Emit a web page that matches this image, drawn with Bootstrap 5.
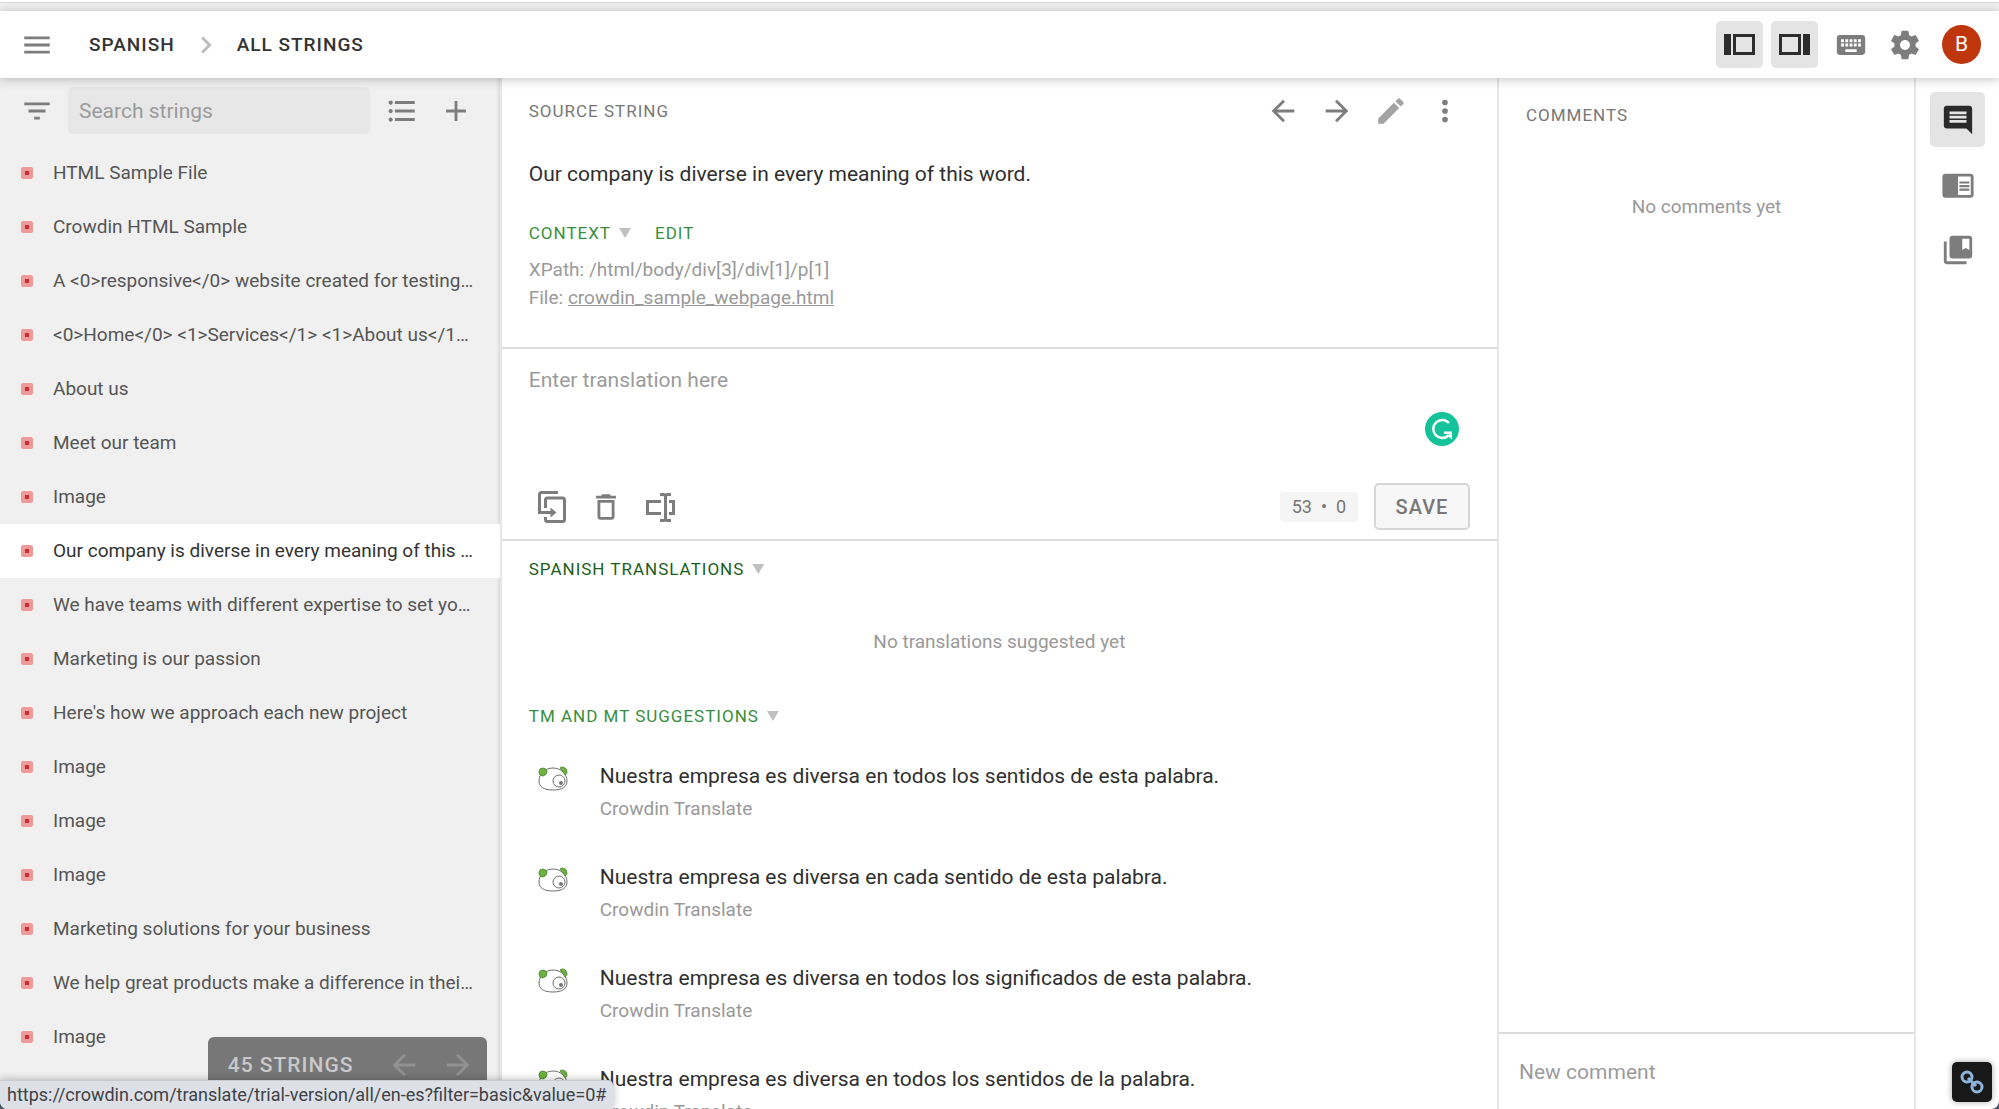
<!DOCTYPE html>
<html lang="en">
<head>
<meta charset="utf-8">
<meta name="viewport" content="width=device-width, initial-scale=1">
<title>Crowdin Editor</title>
<link href="https://cdn.jsdelivr.net/npm/bootstrap@5.3.0/dist/css/bootstrap.min.css" rel="stylesheet">
<script src="https://cdn.jsdelivr.net/npm/bootstrap@5.3.0/dist/js/bootstrap.bundle.min.js"></script>
<style>
html { background: #4b566b; }
body { font-family: Roboto, "Liberation Sans", sans-serif; font-size: 19px; line-height: 28px; color: #333; background: #4b566b; }
.app { background: #fff; border-radius: 0 0 8px 8px; }
.strip { height: 11px; background: #f0f0f0; border-top: 2px solid #fff; box-shadow: inset 0 1px #d8d8d8; }
.topbar { height: 67px; padding: 0 18px 0 20px; box-shadow: 0 1px 10px rgba(0,0,0,.25); z-index: 5; font-weight: 500; letter-spacing: 1px; }
.topbar a { color: #333; text-decoration: none; }
.crumbs { margin-left: 35px; }
.crumb-sep { margin: 0 14px; color: #bbb; }
.ico { width: 34px; height: 34px; fill: currentColor; display: block; flex: none; }
.ib { border: 0; padding: 0; background: none; color: #7d7d7d; width: 34px; flex: none; display: block; }
.toggle { width: 47px; height: 47px; background: #e4e4e4; color: #2d2d2d; border-radius: 5px; display: grid; place-items: center; }
.avatar-b { width: 39px; height: 39px; background: #bf360c; color: #fff; border-radius: 50%; font-size: 21px; font-weight: 400; letter-spacing: 0; line-height: 39px; border: 0; padding: 0; }
.side { width: 25%; background: #f0f0f0; box-shadow: inset -4px 0 4px -3px rgba(0,0,0,.12); }
.side-tools { padding: 9px 27px 12px 20px; }
.searchbox { margin: 0 15px 0 14px; }
.search { height: 47px; background: #e7e7e7; border: 0; border-radius: 5px; padding: 0 11px; font-size: 21px; width: 100%; }
.search::placeholder, .entry::placeholder { color: #9b9b9b; opacity: 1; }
.search:focus, .entry:focus { outline: 1px solid #bbb; }
.srow { height: 54px; padding: 0 26px 0 21px; gap: 20px; color: #555; text-decoration: none; }
.srow.sel { background: #fff; color: #333; }
.dot { width: 12px; height: 12px; border: 4px solid #ee9a9a; background: #c62f35; border-radius: 2px; flex: none; }
.pager { right: 13px; bottom: 16px; width: 279px; height: 56px; background: #777; color: #c9c9c9; border-radius: 6px 6px 0 0; padding: 0 12px 0 20px; font-weight: 500; letter-spacing: 1px; font-size: 21px; }
.pager .ib { color: #919191; }
.cap { font-size: 17px; line-height: 22px; letter-spacing: 1px; font-weight: 400; margin: 0; color: #777; }
.cap a { text-decoration: none; color: #388e3c; }
.cap.deep a { color: #1b5e20; }
.tri { width: 12px; height: 10px; background: #c0c0c0; clip-path: polygon(0 0, 100% 0, 50% 100%); display: inline-block; }
.work { border-left: 2px solid #e6e6e6; }
.src { height: 271px; padding: 16px 35px 0 27px; border-bottom: 2px solid #dcdcdc; }
.src .ctx { margin: 34px 0 12px; }
.big { font-size: 21px; line-height: 28px; color: #2f2f2f; }
.dim { color: #999; }
.pen { color: #a3a3a3; }
.editor { height: 192px; border-bottom: 2px solid #dcdcdc; padding: 17px 27px 9px; }
.entry { border: 0; padding: 0; resize: none; font-size: 21px; line-height: 28px; width: 100%; background: none; }
.edit-tools { padding-left: 6px; }
.gram { right: 38px; top: 63px; width: 34px; height: 34px; }
.count { background: #f5f5f5; color: #777; border-radius: 4px; height: 30px; padding: 0 12px; font-size: 18px; line-height: 30px; white-space: pre; }
.save { width: 96px; height: 47px; border: 2px solid #d6d6d6; background: #f7f7f7; color: #777; border-radius: 5px; font-size: 20px; font-weight: 500; letter-spacing: 1px; padding: 0; }
.results { padding: 17px 27px 0; }
.sugg-head { margin: 49px 0 35px; }
.sugg { gap: 30px; padding-left: 8px; height: 101px; }
.sugg svg { margin-top: 4px; }
.sub { margin-top: 5px; color: #999; }
.notes { width: 417px; border-left: 2px solid #e6e6e6; flex: none; }
.notes-head { padding: 26px 27px 0; }
.none-yet { margin: 67px 0 0; }
.newc { border-top: 2px solid #dcdcdc; height: 77px; padding: 0 20px; }
.rail { width: 85px; border-left: 2px solid #e6e6e6; padding-top: 14px; flex: none; gap: 10px; }
.rb { width: 55px; height: 55px; border: 0; border-radius: 5px; background: none; color: #7d7d7d; display: grid; place-items: center; padding: 0; }
.rb.on { background: #e4e4e4; color: #2a2a2a; }
.status { left: 0; bottom: 0; height: 29px; background: #dde1e7; border-top: 1px solid #c6c9ce; border-radius: 0 5px 0 0; padding: 0 7px; font-size: 18px; line-height: 28px; color: #3f4246; z-index: 8; box-shadow: 0 0 8px rgba(0,0,0,.3); }
.linkbtn { right: 7px; bottom: 7px; width: 40px; height: 40px; border: 0; border-radius: 5px; background: #181818; box-shadow: 0 0 6px rgba(0,0,0,.35); z-index: 8; padding: 0; display: grid; place-items: center; }
</style>
</head>
<body>
<svg class="d-none" xmlns="http://www.w3.org/2000/svg">
  <symbol id="i-menu" viewBox="0 0 24 24"><path d="M3 18h18v-2H3v2zm0-5h18v-2H3v2zm0-7v2h18V6H3z"/></symbol>
  <symbol id="i-chev" viewBox="0 0 24 24"><path d="M10 6L8.59 7.41 13.17 12l-4.58 4.59L10 18l6-6z"/></symbol>
  <symbol id="i-filter" viewBox="0 0 24 24"><path d="M10 18h4v-2h-4v2zM3 6v2h18V6H3zm3 7h12v-2H6v2z"/></symbol>
  <symbol id="i-list" viewBox="0 0 24 24"><path d="M4 10.5c-.83 0-1.5.67-1.5 1.5s.67 1.5 1.5 1.5 1.5-.67 1.5-1.5-.67-1.5-1.5-1.5zm0-6c-.83 0-1.5.67-1.5 1.5S3.17 7.5 4 7.5 5.5 6.83 5.5 6 4.83 4.5 4 4.5zm0 12c-.83 0-1.5.68-1.5 1.5s.68 1.5 1.5 1.5 1.5-.68 1.5-1.5-.67-1.5-1.5-1.5zM7 19h14v-2H7v2zm0-6h14v-2H7v2zm0-8v2h14V5H7z"/></symbol>
  <symbol id="i-add" viewBox="0 0 24 24"><path d="M19 13h-6v6h-2v-6H5v-2h6V5h2v6h6v2z"/></symbol>
  <symbol id="i-back" viewBox="0 0 24 24"><path d="M20 11H7.83l5.59-5.59L12 4l-8 8 8 8 1.41-1.41L7.83 13H20v-2z"/></symbol>
  <symbol id="i-fwd" viewBox="0 0 24 24"><path d="M12 4l-1.41 1.41L16.17 11H4v2h12.17l-5.58 5.59L12 20l8-8z"/></symbol>
  <symbol id="i-edit" viewBox="0 0 24 24"><path d="M3 17.25V21h3.75L17.81 9.94l-3.75-3.75L3 17.25zM20.71 7.04c.39-.39.39-1.02 0-1.41l-2.34-2.34c-.39-.39-1.02-.39-1.41 0l-1.83 1.83 3.75 3.75 1.83-1.83z"/></symbol>
  <symbol id="i-more" viewBox="0 0 24 24"><circle cx="12" cy="6" r="2"/><circle cx="12" cy="12" r="2"/><circle cx="12" cy="18" r="2"/></symbol>
  <symbol id="i-kbd" viewBox="0 0 24 24"><path d="M20 5H4c-1.1 0-1.99.9-1.99 2L2 17c0 1.1.9 2 2 2h16c1.1 0 2-.9 2-2V7c0-1.1-.9-2-2-2zm-9 3h2v2h-2V8zm0 3h2v2h-2v-2zM8 8h2v2H8V8zm0 3h2v2H8v-2zm-1 2H5v-2h2v2zm0-3H5V8h2v2zm9 7H8v-2h8v2zm0-4h-2v-2h2v2zm0-3h-2V8h2v2zm3 3h-2v-2h2v2zm0-3h-2V8h2v2z"/></symbol>
  <symbol id="i-gear" viewBox="0 0 24 24"><path d="M19.43 12.98c.04-.32.07-.64.07-.98s-.03-.66-.07-.98l2.11-1.65c.19-.15.24-.42.12-.64l-2-3.46c-.12-.22-.39-.3-.61-.22l-2.49 1c-.52-.4-1.08-.73-1.69-.98l-.38-2.65C14.46 2.18 14.25 2 14 2h-4c-.25 0-.46.18-.49.42l-.38 2.65c-.61.25-1.17.59-1.69.98l-2.49-1c-.23-.09-.49 0-.61.22l-2 3.46c-.13.22-.07.49.12.64l2.11 1.65c-.04.32-.07.65-.07.98s.03.66.07.98l-2.11 1.65c-.19.15-.24.42-.12.64l2 3.46c.12.22.39.3.61.22l2.49-1c.52.4 1.08.73 1.69.98l.38 2.65c.03.24.24.42.49.42h4c.25 0 .46-.18.49-.42l.38-2.65c.61-.25 1.17-.59 1.69-.98l2.49 1c.23.09.49 0 .61-.22l2-3.46c.12-.22.07-.49-.12-.64l-2.11-1.65zM12 15.5c-1.93 0-3.5-1.57-3.5-3.5s1.57-3.5 3.5-3.5 3.5 1.57 3.5 3.5-1.57 3.5-3.5 3.5z"/></symbol>
  <symbol id="i-comment" viewBox="0 0 24 24"><path d="M21.99 4c0-1.1-.89-2-1.99-2H4c-1.1 0-2 .9-2 2v12c0 1.1.9 2 2 2h14l4 4-.01-18zM18 14H6v-2h12v2zm0-3H6V9h12v2zm0-3H6V6h12v2z"/></symbol>
  <symbol id="i-reader" viewBox="0 0 24 24"><path d="M13 12h7v1.5h-7zm0-2.5h7V11h-7zm0 5h7V16h-7zM21 4H3c-1.1 0-2 .9-2 2v13c0 1.1.9 2 2 2h18c1.1 0 2-.9 2-2V6c0-1.1-.9-2-2-2zm0 15h-9V6h9v13z"/></symbol>
  <symbol id="i-books" viewBox="0 0 24 24"><path d="M4 6H2v14c0 1.1.9 2 2 2h14v-2H4V6z"/><path d="M20 2H8c-1.1 0-2 .9-2 2v12c0 1.1.9 2 2 2h12c1.1 0 2-.9 2-2V4c0-1.1-.9-2-2-2zm0 10l-2.5-1.5L15 12V4h5v8z"/></symbol>
  <symbol id="i-trash" viewBox="0 0 24 24"><path d="M6 19c0 1.1.9 2 2 2h8c1.1 0 2-.9 2-2V7H6v12zM8 9h8v10H8V9zm7.5-5l-1-1h-5l-1 1H5v2h14V4z"/></symbol>
  <symbol id="i-copy" viewBox="0 0 34 34"><g fill="none" stroke="currentColor" stroke-width="3"><path d="M23 2.500H6.500q-2 0-2 2V22.500H16"/><path d="M10.500 18V10q0-2 2-2h15q2 0 2 2v19.500q0 2-2 2h-15q-2 0-2-2V27"/></g><path d="M15.500 17.500l6 5-6 5z"/></symbol>
  <symbol id="i-rename" viewBox="0 0 34 34"><g fill="none" stroke="currentColor" stroke-width="3"><path d="M18 23.500H4.500v-12H18M26 11.500h4.500v12H26"/><path d="M22.500 5v25M17 4.500h3q2.500 0 2.500 2 0-2 2.500-2h3M17 30.500h3q2.500 0 2.500-2 0 2 2.500 2h3"/></g></symbol>
  <symbol id="i-panda" viewBox="0 0 33 26"><g stroke="#6f6f6f" stroke-width="1"><path fill="#fff" d="M16 2c8 0 14 6 14 13 0 6-5 9-14 9S2 21 2 15C2 8 8 2 16 2z"/><path fill="#6cb33f" stroke="#5a8f3c" d="M2 6q0-4 4-4 4 1 4 3 0 4-4 5-4 0-4-4zM23 2q1-1 3-1 4 1 4 5 0 2-2 3-2-4-5-7z"/><circle fill="#fff" cx="22" cy="15" r="6"/></g><circle fill="#777" cx="24" cy="17" r="2"/></symbol>
</svg>
<div class="app vh-100 d-flex flex-column overflow-hidden position-relative">
  <div class="strip flex-shrink-0"></div>
  <header class="topbar bg-white d-flex align-items-center flex-shrink-0 position-relative">
    <button class="ib" aria-label="Menu"><svg class="ico"><use href="#i-menu"/></svg></button>
    <nav class="crumbs d-flex align-items-center" aria-label="Project path">
      <a href="#">SPANISH</a>
      <svg class="ico crumb-sep"><use href="#i-chev"/></svg>
      <a href="#">ALL STRINGS</a>
    </nav>
    <div class="d-flex align-items-center ms-auto">
      <button class="ib toggle me-2" aria-label="Toggle left panel"><svg width="31" height="21" viewBox="0 0 31 21" fill="currentColor"><path d="M0 0h7v21H0zM9 0h22v21H9zM12 3v15h16V3z" fill-rule="evenodd"/></svg></button>
      <button class="ib toggle me-3" aria-label="Toggle right panel"><svg width="31" height="21" viewBox="0 0 31 21" fill="currentColor"><path d="M24 0h7v21h-7zM0 0h22v21H0zM3 3v15h16V3z" fill-rule="evenodd"/></svg></button>
      <button class="ib me-3" aria-label="Keyboard shortcuts"><svg class="ico"><use href="#i-kbd"/></svg></button>
      <button class="ib ms-1 me-3" aria-label="Settings"><svg class="ico"><use href="#i-gear"/></svg></button>
      <button class="avatar-b ms-1" aria-label="Account">B</button>
    </div>
  </header>
  <div class="d-flex flex-grow-1 overflow-hidden">
    <aside class="side d-flex flex-column flex-shrink-0 position-relative overflow-hidden">
      <div class="side-tools d-flex align-items-center">
        <button class="ib" aria-label="Filter"><svg class="ico"><use href="#i-filter"/></svg></button>
        <div class="searchbox flex-grow-1"><input class="search" type="text" placeholder="Search strings" aria-label="Search strings"></div>
        <button class="ib me-3" aria-label="View list"><svg class="ico"><use href="#i-list"/></svg></button>
        <button class="ib ms-1" aria-label="Add string"><svg class="ico"><use href="#i-add"/></svg></button>
      </div>
      <nav class="d-flex flex-column" aria-label="Strings">
        <a href="#" class="srow d-flex align-items-center flex-shrink-0"><span class="dot"></span><span class="text-truncate">HTML Sample File</span></a>
        <a href="#" class="srow d-flex align-items-center flex-shrink-0"><span class="dot"></span><span class="text-truncate">Crowdin HTML Sample</span></a>
        <a href="#" class="srow d-flex align-items-center flex-shrink-0"><span class="dot"></span><span class="text-truncate">A &lt;0&gt;responsive&lt;/0&gt; website created for testing purposes</span></a>
        <a href="#" class="srow d-flex align-items-center flex-shrink-0"><span class="dot"></span><span class="text-truncate">&lt;0&gt;Home&lt;/0&gt; &lt;1&gt;Services&lt;/1&gt; &lt;1&gt;About us&lt;/1&gt; &lt;1&gt;Contact&lt;/1&gt;</span></a>
        <a href="#" class="srow d-flex align-items-center flex-shrink-0"><span class="dot"></span><span class="text-truncate">About us</span></a>
        <a href="#" class="srow d-flex align-items-center flex-shrink-0"><span class="dot"></span><span class="text-truncate">Meet our team</span></a>
        <a href="#" class="srow d-flex align-items-center flex-shrink-0"><span class="dot"></span><span class="text-truncate">Image</span></a>
        <a href="#" class="srow sel d-flex align-items-center flex-shrink-0"><span class="dot"></span><span class="text-truncate">Our company is diverse in every meaning of this word.</span></a>
        <a href="#" class="srow d-flex align-items-center flex-shrink-0"><span class="dot"></span><span class="text-truncate">We have teams with different expertise to set your business apart</span></a>
        <a href="#" class="srow d-flex align-items-center flex-shrink-0"><span class="dot"></span><span class="text-truncate">Marketing is our passion</span></a>
        <a href="#" class="srow d-flex align-items-center flex-shrink-0"><span class="dot"></span><span class="text-truncate">Here's how we approach each new project</span></a>
        <a href="#" class="srow d-flex align-items-center flex-shrink-0"><span class="dot"></span><span class="text-truncate">Image</span></a>
        <a href="#" class="srow d-flex align-items-center flex-shrink-0"><span class="dot"></span><span class="text-truncate">Image</span></a>
        <a href="#" class="srow d-flex align-items-center flex-shrink-0"><span class="dot"></span><span class="text-truncate">Image</span></a>
        <a href="#" class="srow d-flex align-items-center flex-shrink-0"><span class="dot"></span><span class="text-truncate">Marketing solutions for your business</span></a>
        <a href="#" class="srow d-flex align-items-center flex-shrink-0"><span class="dot"></span><span class="text-truncate">We help great products make a difference in their markets</span></a>
        <a href="#" class="srow d-flex align-items-center flex-shrink-0"><span class="dot"></span><span class="text-truncate">Image</span></a>
      </nav>
      <div class="pager position-absolute d-flex align-items-center">
        <span class="me-auto">45 STRINGS</span>
        <button class="ib me-3" aria-label="Previous page"><svg class="ico"><use href="#i-back"/></svg></button>
        <button class="ib ms-1" aria-label="Next page"><svg class="ico"><use href="#i-fwd"/></svg></button>
      </div>
    </aside>
    <main class="work flex-grow-1 d-flex flex-column overflow-hidden">
      <section class="src flex-shrink-0">
        <div class="d-flex align-items-center">
          <h2 class="cap me-auto">SOURCE STRING</h2>
          <button class="ib me-3" aria-label="Previous string"><svg class="ico"><use href="#i-back"/></svg></button>
          <button class="ib ms-1 me-3" aria-label="Next string"><svg class="ico"><use href="#i-fwd"/></svg></button>
          <button class="ib pen ms-1 me-3" aria-label="Edit string"><svg class="ico"><use href="#i-edit"/></svg></button>
          <button class="ib ms-1" aria-label="More"><svg class="ico"><use href="#i-more"/></svg></button>
        </div>
        <p class="big mb-0 mt-4 pt-2">Our company is diverse in every meaning of this word.</p>
        <div class="cap ctx d-flex align-items-center"><a href="#">CONTEXT</a><span class="tri ms-2 me-4"></span><a href="#">EDIT</a></div>
        <div class="dim">XPath: /html/body/div[3]/div[1]/p[1]</div>
        <div class="dim">File: <a class="dim" href="#">crowdin_sample_webpage.html</a></div>
      </section>
      <section class="editor d-flex flex-column position-relative flex-shrink-0">
        <textarea class="entry flex-grow-1" placeholder="Enter translation here" aria-label="Translation"></textarea>
        <svg class="gram position-absolute" viewBox="0 0 34 34"><circle cx="17" cy="17" r="17" fill="#15c39a"/><path d="M24 11A9 9 0 1 0 23.500 23.500" fill="none" stroke="#fff" stroke-width="2.500"/><path fill="#fff" d="M19 19.500h8v8l-2.500-2.300-2-.5 1.500-2.700h-5z"/></svg>
        <div class="edit-tools d-flex align-items-center">
          <button class="ib me-3" aria-label="Copy source"><svg class="ico"><use href="#i-copy"/></svg></button>
          <button class="ib ms-1 me-3" aria-label="Clear translation"><svg class="ico"><use href="#i-trash"/></svg></button>
          <button class="ib ms-1" aria-label="Select text"><svg class="ico"><use href="#i-rename"/></svg></button>
          <span class="count ms-auto me-3">53  •  0</span>
          <button class="save">SAVE</button>
        </div>
      </section>
      <section class="results overflow-hidden">
        <h2 class="cap deep d-flex align-items-center"><a href="#">SPANISH TRANSLATIONS</a><span class="tri ms-2"></span></h2>
        <p class="dim text-center mt-5 mb-0">No translations suggested yet</p>
        <h2 class="cap sugg-head d-flex align-items-center"><a href="#">TM AND MT SUGGESTIONS</a><span class="tri ms-2"></span></h2>
        <div class="sugg d-flex"><svg class="flex-shrink-0" width="33" height="26"><use href="#i-panda"/></svg><div><div class="big">Nuestra empresa es diversa en todos los sentidos de esta palabra.</div><div class="sub">Crowdin Translate</div></div></div>
        <div class="sugg d-flex"><svg class="flex-shrink-0" width="33" height="26"><use href="#i-panda"/></svg><div><div class="big">Nuestra empresa es diversa en cada sentido de esta palabra.</div><div class="sub">Crowdin Translate</div></div></div>
        <div class="sugg d-flex"><svg class="flex-shrink-0" width="33" height="26"><use href="#i-panda"/></svg><div><div class="big">Nuestra empresa es diversa en todos los significados de esta palabra.</div><div class="sub">Crowdin Translate</div></div></div>
        <div class="sugg d-flex"><svg class="flex-shrink-0" width="33" height="26"><use href="#i-panda"/></svg><div><div class="big">Nuestra empresa es diversa en todos los sentidos de la palabra.</div><div class="sub">Crowdin Translate</div></div></div>
      </section>
    </main>
    <aside class="notes d-flex flex-column">
      <div class="notes-head flex-grow-1">
        <h2 class="cap">COMMENTS</h2>
        <p class="dim none-yet text-center">No comments yet</p>
      </div>
      <div class="newc d-flex align-items-center"><input class="entry" type="text" placeholder="New comment" aria-label="New comment"></div>
    </aside>
    <nav class="rail d-flex flex-column align-items-center" aria-label="Panels">
      <button class="rb on" aria-label="Comments"><svg class="ico"><use href="#i-comment"/></svg></button>
      <button class="rb" aria-label="Context"><svg class="ico"><use href="#i-reader"/></svg></button>
      <button class="rb" aria-label="Glossary"><svg class="ico"><use href="#i-books"/></svg></button>
    </nav>
  </div>
  <div class="status position-absolute">https://crowdin.com/translate/trial-version/all/en-es?filter=basic&amp;value=0#</div>
  <button class="linkbtn position-absolute" aria-label="Copy link"><svg width="24" height="24" viewBox="0 0 24 24" fill="none" stroke="#8db4dc" stroke-width="3"><circle cx="7" cy="7" r="5"/><circle cx="17" cy="17" r="5"/><path d="M8 8l8 8"/></svg></button>
</div>
</body>
</html>
